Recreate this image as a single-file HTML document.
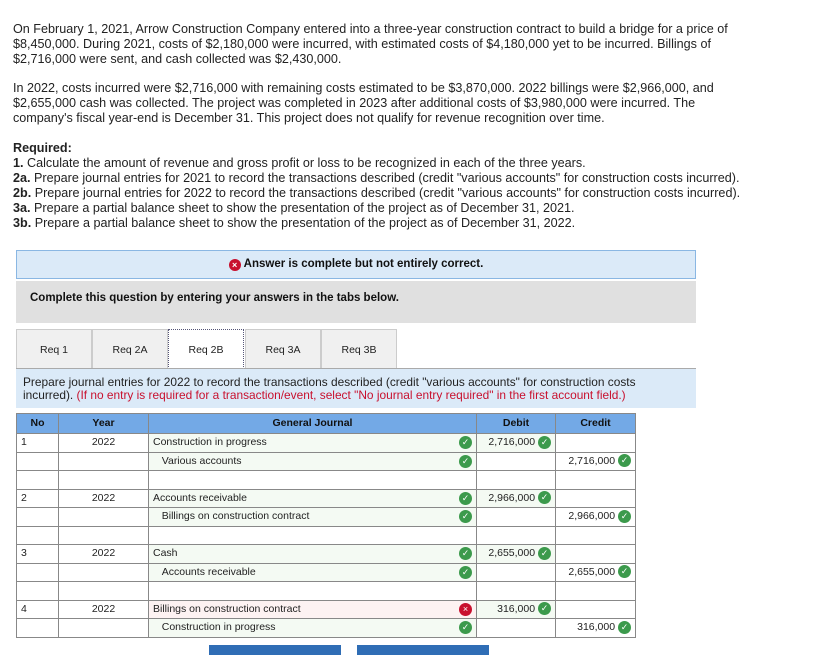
<!DOCTYPE html>
<html><head><style>
body{margin:0;width:829px;height:653px;overflow:hidden;background:#fff;font-family:"Liberation Sans",Arial,sans-serif;color:#222;position:relative}
.p{position:absolute;left:13px;font-size:12.6px;line-height:15px;width:800px}
.ab{position:absolute;left:16px;top:250px;width:678px;height:27px;background:#dbeaf8;border:1px solid #8ab7e3;font-size:11.5px;font-weight:bold;text-align:center;line-height:27px;color:#111}
.xi{display:inline-block;width:12px;height:12px;border-radius:50%;background:#c8102e;color:#fff;font-size:9px;line-height:12px;text-align:center;vertical-align:-1px;margin-right:3px}
.gray{position:absolute;left:16px;top:281px;width:680px;height:42px;background:#e0e0e0;font-size:11.5px;font-weight:bold;color:#111}
.tab{position:absolute;top:329px;height:38px;width:74px;background:#f0f0f0;border:1px solid #ccc;border-bottom:none;font-size:10.5px;text-align:center;line-height:40px;color:#222}
.tab.a{background:#fff;border:1px dotted #557;border-bottom:none;height:39px}
.inst{position:absolute;left:16px;top:368px;width:680px;height:39px;background:#dbeaf8;border-top:1px solid #aaa;font-size:11.9px;line-height:12.5px;color:#222}
table{position:absolute;left:16px;top:413px;border-collapse:collapse;font-size:10.5px}
td,th{border:1px solid #888;height:18.5px;padding:0 4px;line-height:15px;vertical-align:middle;box-sizing:border-box}
th{background:#73a9e6;font-weight:bold;color:#111;height:20px}
.g{background:#f4faf3}.r{background:#fdf2f2}
.gj{display:flex;justify-content:space-between;align-items:center}
.ck{display:inline-block;width:13px;height:13px;border-radius:50%;background:#3c9a4c;color:#fff;font-size:9px;line-height:13px;text-align:center;vertical-align:middle}
.ck.x{background:#c8102e}
.num{text-align:right}
.btn{position:absolute;top:645px;height:10px;width:132px;background:#2f6db5}
</style></head><body>
<div class="p" style="top:22px">On February 1, 2021, Arrow Construction Company entered into a three-year construction contract to build a bridge for a price of<br>$8,450,000. During 2021, costs of $2,180,000 were incurred, with estimated costs of $4,180,000 yet to be incurred. Billings of<br>$2,716,000 were sent, and cash collected was $2,430,000.</div>
<div class="p" style="top:81px">In 2022, costs incurred were $2,716,000 with remaining costs estimated to be $3,870,000. 2022 billings were $2,966,000, and<br>$2,655,000 cash was collected. The project was completed in 2023 after additional costs of $3,980,000 were incurred. The<br>company's fiscal year-end is December 31. This project does not qualify for revenue recognition over time.</div>
<div class="p" style="top:141px"><b>Required:</b><br><b>1.</b> Calculate the amount of revenue and gross profit or loss to be recognized in each of the three years.<br><b>2a.</b> Prepare journal entries for 2021 to record the transactions described (credit "various accounts" for construction costs incurred).<br><b>2b.</b> Prepare journal entries for 2022 to record the transactions described (credit "various accounts" for construction costs incurred).<br><b>3a.</b> Prepare a partial balance sheet to show the presentation of the project as of December 31, 2021.<br><b>3b.</b> Prepare a partial balance sheet to show the presentation of the project as of December 31, 2022.</div>
<div class="ab"><span class="xi">×</span>Answer is complete but not entirely correct.</div>
<div class="gray"><div style="position:absolute;left:14px;top:11px">Complete this question by entering your answers in the tabs below.</div></div>
<div class="tab" style="left:16px">Req 1</div>
<div class="tab" style="left:92px">Req 2A</div>
<div class="tab a" style="left:168px">Req 2B</div>
<div class="tab" style="left:245px">Req 3A</div>
<div class="tab" style="left:321px">Req 3B</div>
<div class="inst"><div style="position:absolute;left:7px;top:7px;white-space:nowrap">Prepare journal entries for 2022 to record the transactions described (credit "various accounts" for construction costs<br>incurred). <span style="color:#c8102e">(If no entry is required for a transaction/event, select "No journal entry required" in the first account field.)</span></div></div>
<table>
<tr><th style="width:42px">No</th><th style="width:90px">Year</th><th style="width:328px">General Journal</th><th style="width:79px">Debit</th><th style="width:80px">Credit</th></tr>
<tr><td>1</td><td style="text-align:center">2022</td><td class="g"><div class="gj"><span>Construction in progress</span><span class="ck">✓</span></div></td><td class="num g">2,716,000 <span class="ck">✓</span></td><td></td></tr>
<tr><td></td><td></td><td class="g"><div class="gj"><span>&nbsp;&nbsp;&nbsp;Various accounts</span><span class="ck">✓</span></div></td><td></td><td class="num">2,716,000 <span class="ck">✓</span></td></tr>
<tr><td></td><td></td><td></td><td></td><td></td></tr>
<tr><td>2</td><td style="text-align:center">2022</td><td class="g"><div class="gj"><span>Accounts receivable</span><span class="ck">✓</span></div></td><td class="num g">2,966,000 <span class="ck">✓</span></td><td></td></tr>
<tr><td></td><td></td><td class="g"><div class="gj"><span>&nbsp;&nbsp;&nbsp;Billings on construction contract</span><span class="ck">✓</span></div></td><td></td><td class="num">2,966,000 <span class="ck">✓</span></td></tr>
<tr><td></td><td></td><td></td><td></td><td></td></tr>
<tr><td>3</td><td style="text-align:center">2022</td><td class="g"><div class="gj"><span>Cash</span><span class="ck">✓</span></div></td><td class="num g">2,655,000 <span class="ck">✓</span></td><td></td></tr>
<tr><td></td><td></td><td class="g"><div class="gj"><span>&nbsp;&nbsp;&nbsp;Accounts receivable</span><span class="ck">✓</span></div></td><td></td><td class="num">2,655,000 <span class="ck">✓</span></td></tr>
<tr><td></td><td></td><td></td><td></td><td></td></tr>
<tr><td>4</td><td style="text-align:center">2022</td><td class="r"><div class="gj"><span>Billings on construction contract</span><span class="ck x">×</span></div></td><td class="num g">316,000 <span class="ck">✓</span></td><td></td></tr>
<tr><td></td><td></td><td class="g"><div class="gj"><span>&nbsp;&nbsp;&nbsp;Construction in progress</span><span class="ck">✓</span></div></td><td></td><td class="num">316,000 <span class="ck">✓</span></td></tr>
</table>
<div class="btn" style="left:209px"></div>
<div class="btn" style="left:357px"></div>
</body></html>
